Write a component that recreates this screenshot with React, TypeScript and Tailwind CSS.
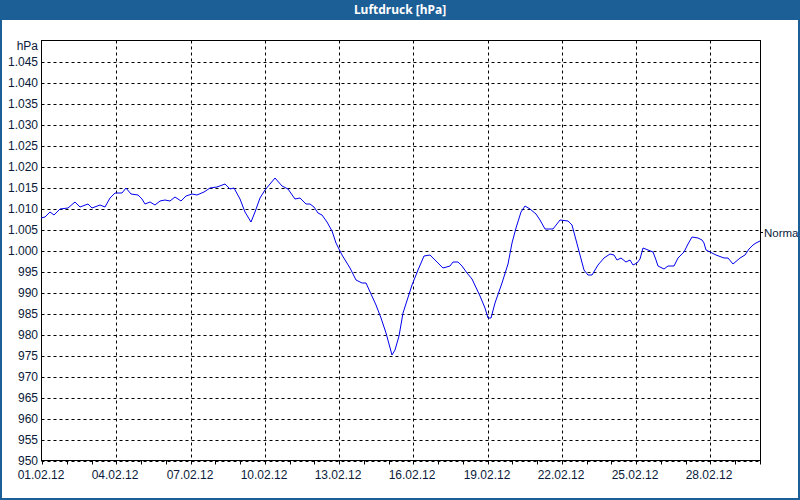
const pts = [[41,218],[45,217],[50,212],[54,215],[60,209],[68,208],[75,202],[80,207],[88,204],[92,208],[100,205],[105,207],[110,198],[115,193],[122,193],[126,188],[131,194],[138,195],[142,199],[145,204],[150,202],[155,205],[160,201],[165,200],[170,201],[175,197],[181,201],[186,196],[192,194],[197,195],[204,192],[210,188],[217,187],[225,184],[230,189],[234,188],[240,199],[245,212],[251,222],[255,212],[260,198],[265,190],[275,178],[282,186],[288,189],[295,199],[300,198],[306,204],[310,204],[314,207],[318,213],[322,215],[327,222],[332,231],[336,243],[342,255],[350,268],[356,280],[362,283],[366,283],[371,294],[376,305],[381,318],[386,333],[392,355],[395,350],[399,336],[403,313],[412,285],[418,270],[424,256],[430,255],[434,259],[438,263],[443,268],[450,266],[453,262],[458,262],[462,266],[467,273],[472,279],[480,296],[485,308],[488,318],[491,318],[495,303],[502,283],[508,264],[512,243],[516,228],[521,212],[525,206],[530,209],[536,214],[540,220],[545,229],[553,229],[560,220],[568,221],[572,225],[576,240],[580,255],[584,270],[588,275],[592,275],[598,265],[604,258],[610,254],[614,255],[617,260],[621,258],[626,262],[630,260],[633,265],[637,263],[640,259],[643,248],[648,250],[653,252],[656,260],[658,266],[664,269],[668,266],[674,266],[678,258],[684,252],[688,244],[692,237],[698,238],[702,240],[704,243],[706,250],[712,253],[716,255],[724,258],[728,258],[733,264],[740,258],[745,255],[749,249],[753,245],[756,243],[760,241]];

const L = 41.5, R = 760.5, T = 40.5, B = 460.5;
const dayW = (760 - 42) / 29;
const yLabels = Array.from({ length: 20 }, (_, i) => 1045 - i * 5);
const yOf = (v: number) => 461 - (v - 950) * 4.2;
const fmt = (v: number) => (v >= 1000 ? "1." + String(v - 1000).padStart(3, "0") : String(v));
const FF = "Tahoma, 'Liberation Sans', sans-serif";

export default function App() {
  return (
    <div className="w-[800px] h-[500px] bg-white border-2 border-t-0 border-[#1c5e96] flex flex-col overflow-hidden font-['Tahoma','DejaVu_Sans',sans-serif]">
      <div className="h-[20px] -mx-[2px] bg-[#1c5e96] text-white text-[12px] font-bold flex items-center justify-center">Luftdruck [hPa]</div>
      <svg width="796" height="478" viewBox="2 20 796 478" className="block" fontFamily={FF}>
        {yLabels.map((v) => (
          <g key={v}>
            <line x1={L} x2={R} y1={Math.round(yOf(v)) + 0.5} y2={Math.round(yOf(v)) + 0.5} stroke="#000" strokeDasharray="3 3" />
            <text x={38} y={Math.round(yOf(v)) + 4} fontSize="12" textAnchor="end" fill="#0a1a3a">{fmt(v)}</text>
          </g>
        ))}
        <text x={38} y={50} fontSize="12" textAnchor="end" fill="#0a1a3a">hPa</text>
        {Array.from({ length: 9 }, (_, i) => (i + 1) * 3).map((d) => {
          const x = Math.round(42 + d * dayW) + 0.5;
          return <line key={d} x1={x} x2={x} y1={T} y2={B} stroke="#000" strokeDasharray="3 3" />;
        })}
        {Array.from({ length: 30 }, (_, d) => {
          const x = Math.round(42 + d * dayW) + 0.5;
          return <line key={d} x1={x} x2={x} y1={B} y2={B + 4} stroke="#000" />;
        })}
        {Array.from({ length: 10 }, (_, i) => i * 3).map((d) => {
          const x = Math.round(42 + d * dayW) - 1;
          return <text key={d} x={x} y={479} fontSize="12" textAnchor="middle" fill="#0a1a3a">{String(d + 1).padStart(2, "0")}.02.12</text>;
        })}
        <rect x={L} y={T} width={R - L} height={B - T} fill="none" stroke="#000" />
        <polyline points={pts.map((p) => p.join(",")).join(" ")} fill="none" stroke="#0000ee" strokeWidth="1" />
        <line x1={760} x2={763} y1={232.5} y2={232.5} stroke="#000" />
        <text x={764} y={237} fontSize="11.5" fill="#0a1a3a">Normal</text>
      </svg>
    </div>
  );
}
